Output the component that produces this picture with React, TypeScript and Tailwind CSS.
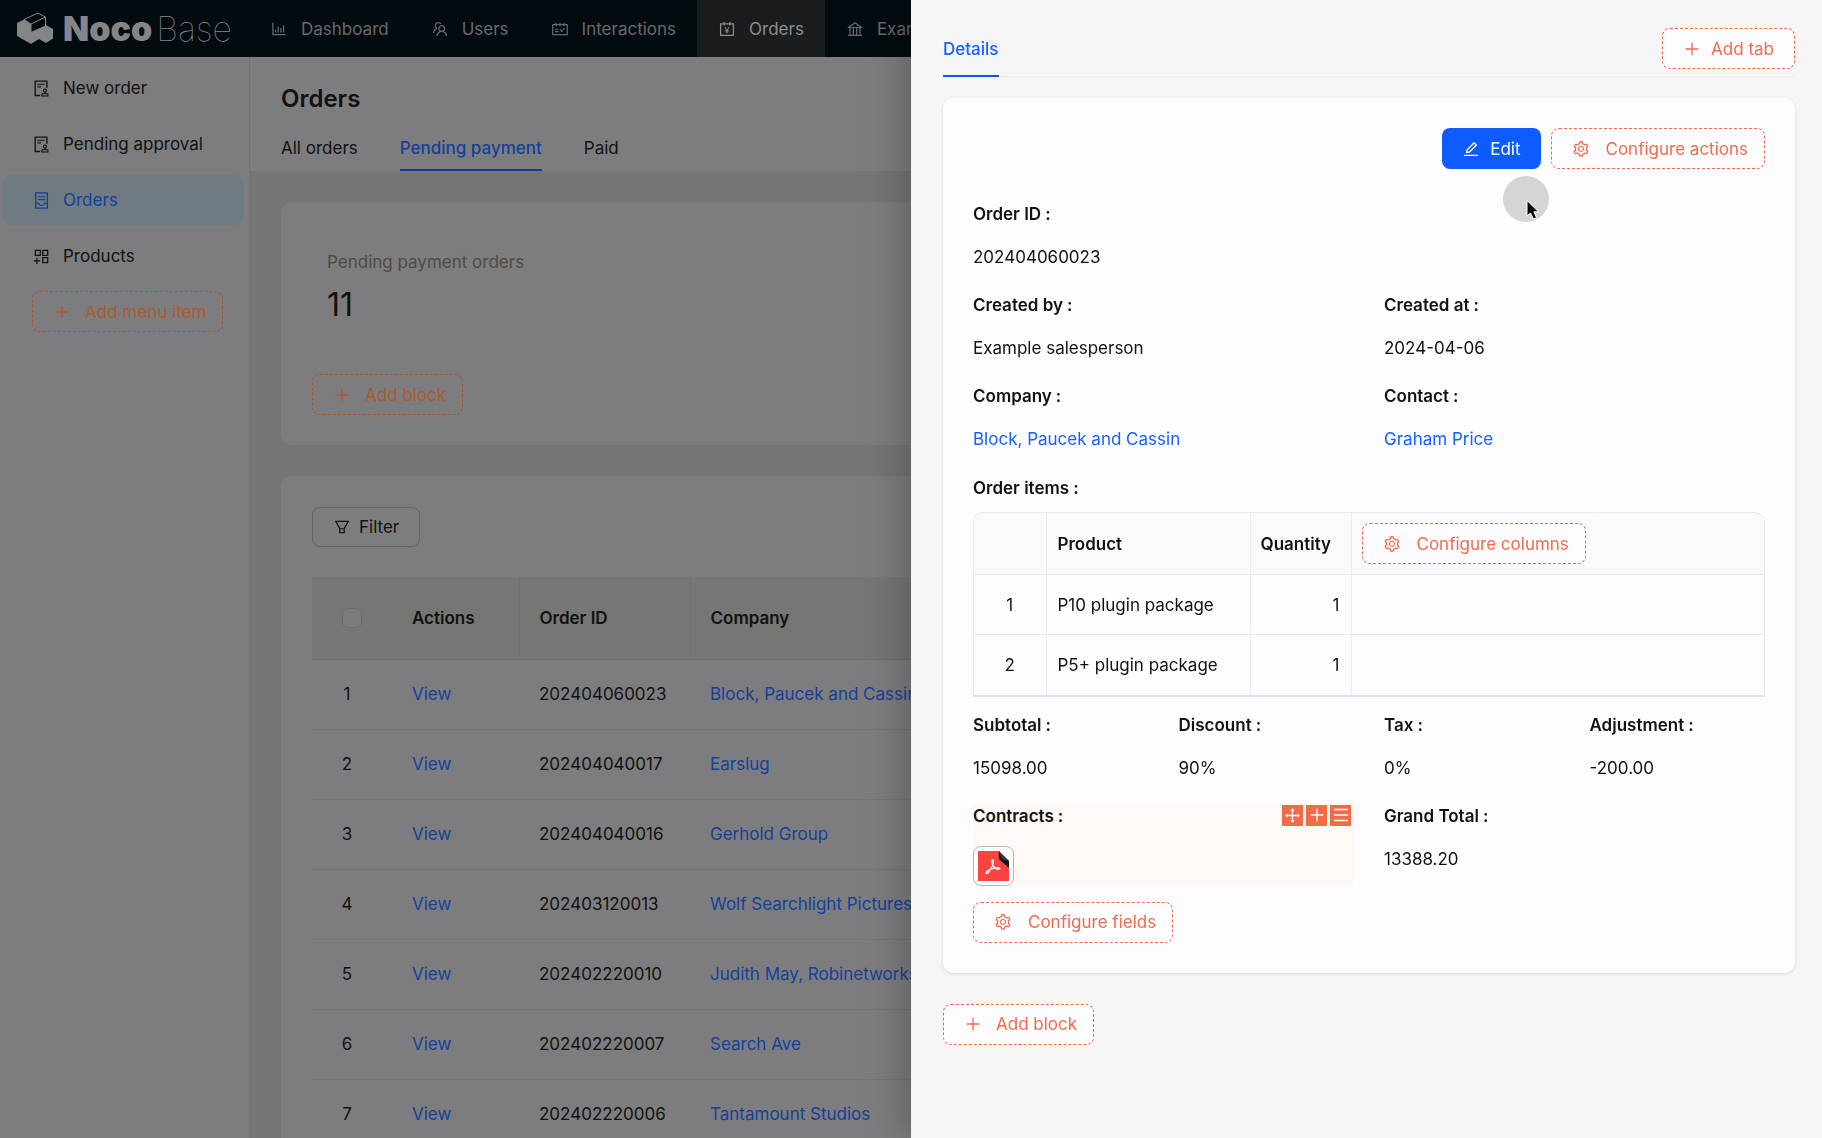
import type { ReactNode } from "react";
import type { IconType } from "react-icons";
import {
  AiOutlineAccountBook,
  AiOutlineAppstoreAdd,
  AiOutlineAudit,
  AiOutlineBank,
  AiOutlineBarChart,
  AiOutlineContainer,
  AiOutlineDrag,
  AiOutlineEdit,
  AiOutlineFilter,
  AiOutlineMenu,
  AiOutlinePlus,
  AiOutlineSchedule,
  AiOutlineSetting,
  AiOutlineTeam,
} from "react-icons/ai";

const topNav: { icon: IconType; label: string; active?: boolean }[] = [
  { icon: AiOutlineBarChart, label: "Dashboard" },
  { icon: AiOutlineTeam, label: "Users" },
  { icon: AiOutlineSchedule, label: "Interactions" },
  { icon: AiOutlineAccountBook, label: "Orders", active: true },
  { icon: AiOutlineBank, label: "Examples" },
];

const sideNav: { icon: IconType; label: string; active?: boolean }[] = [
  { icon: AiOutlineAudit, label: "New order" },
  { icon: AiOutlineAudit, label: "Pending approval" },
  { icon: AiOutlineContainer, label: "Orders", active: true },
  { icon: AiOutlineAppstoreAdd, label: "Products" },
];

const orders = [
  ["202404060023", "Block, Paucek and Cassin"],
  ["202404040017", "Earslug"],
  ["202404040016", "Gerhold Group"],
  ["202403120013", "Wolf Searchlight Pictures"],
  ["202402220010", "Judith May, Robinetworks"],
  ["202402220007", "Search Ave"],
  ["202402220006", "Tantamount Studios"],
];

const items = [
  ["P10 plugin package", "1"],
  ["P5+ plugin package", "1"],
];

function Logo() {
  return (
    <a href="#home" className="flex w-[249px] shrink-0 items-center pl-4 text-[#858588]">
      <svg width="38" height="34" viewBox="0 0 38 34" aria-hidden="true">
        <path d="M1 11 L8 7.5 L15 12 V20 L26 14 L30 13 L37 17 V26.5 L30 31 L23 27 L15 32 L1 24 Z" fill="currentColor" />
        <path d="M8 7.5 L22 1 L29.500 5 V14 L15 20.500 V12 Z" fill="#020c10" stroke="currentColor" strokeWidth="1" />
        <path d="M15 12 L29.500 5" stroke="currentColor" strokeWidth="1" />
      </svg>
      <span className="ml-[9px] text-[34px] leading-[40px] font-black">Noco</span>
      <span className="ml-1 text-[34px] leading-[40px] font-thin">Base</span>
    </a>
  );
}

const tones = {
  bright: "border-[#f2694a] bg-[#fdfdff] text-[#f16b4b] ",
  dim: "border-[#ab5526] text-[#ab5a30] ",
};

const spacings = {
  add: "gap-3.5 pr-4",
  settings: "gap-4 pr-4",
  compact: "gap-2.5 pr-5",
};

function DashedButton({
  icon: Icon,
  children,
  tone,
  spacing,
}: {
  icon: IconType;
  children: ReactNode;
  tone: keyof typeof tones;
  spacing: keyof typeof spacings;
}) {
  return (
    <button
      type="button"
      className={
        "flex h-[41px] w-fit shrink-0 items-center rounded-lg border border-dashed pl-5 leading-6 whitespace-nowrap " +
        tones[tone] +
        spacings[spacing]
      }
    >
      <Icon size={18} />
      {children}
    </button>
  );
}

function Field({ label, children }: { label: string; children: ReactNode }) {
  return (
    <div className="flex flex-col gap-4 leading-[27px]">
      <div className="font-semibold">
        {label}
        <span className="ml-1">:</span>
      </div>
      <div>{children}</div>
    </div>
  );
}

function PdfThumb() {
  return (
    <a href="#contract" aria-label="Contract PDF" className="block w-fit rounded-lg border border-[#b9b6bd] bg-[#fdfdff] p-1">
      <svg width="31" height="30" viewBox="0 0 32 30" preserveAspectRatio="none" aria-hidden="true">
        <path d="M0 0 H32 V30 H0 Z" fill="#fd4340" />
        <path d="M21.500 0 H32 V17 Z" fill="#fdfdff" />
        <path d="M21.500 0 L32 10 V17 L21.500 8 Z" fill="#15171c" />
        <path d="M21.500 0 L32 10 L25 8 Z" fill="#3c3f46" />
        <path
          d="M15 9 C13.500 9 14.500 13.500 16 15.500 C18 18.500 22.500 19 22.500 17.500 C22.500 15.500 12 17.500 9 20.500 C7.500 22.500 9.500 23.500 11.500 20.500 C13.500 17.500 16.500 12 15.800 9.500 Z"
          fill="none"
          stroke="#ffeceb"
          strokeWidth="1.500"
          strokeLinejoin="round"
        />
      </svg>
    </a>
  );
}

function Header() {
  return (
    <header className="flex h-[57px] shrink-0 bg-[#020c10] text-[#68686b]">
      <Logo />
      <nav className="flex">
        {topNav.map(({ icon: Icon, label, active }) => (
          <a
            key={label}
            href={"#" + label}
            className={"flex items-center gap-[13px] px-[21px] " + (active ? "bg-[#1a1c1d] text-[#8c8c90]" : "")}
          >
            <Icon size={18} />
            {label}
          </a>
        ))}
      </nav>
    </header>
  );
}

function Sidebar() {
  return (
    <aside className="w-[250px] shrink-0 border-r border-[#73736f] bg-[#7d7d80] pt-1.5 pr-[5px] pl-0.5">
      <nav className="flex flex-col gap-1.5">
        {sideNav.map(({ icon: Icon, label, active }, i) => (
          <a
            key={i}
            href={"#side-" + i}
            className={
              "flex h-[50px] items-center gap-3 rounded-[10px] pl-[30px] " + (active ? "bg-[#707a82] text-[#144199]" : "")
            }
          >
            <Icon size={19} />
            {label}
          </a>
        ))}
      </nav>
      <div className="mt-2.5 pl-[30px]">
        <DashedButton icon={AiOutlinePlus} tone="dim" spacing="add">
          Add menu item
        </DashedButton>
      </div>
    </aside>
  );
}

function OrdersPage() {
  const th = "border-r border-[#70706e] px-5 text-left font-semibold";
  return (
    <main className="min-w-0 flex-1">
      <div className="bg-[#7d7d80] px-[31px] pt-6">
        <h1 className="text-[24px] leading-9 font-semibold">Orders</h1>
        <div className="mt-4 flex gap-[42px]">
          <a href="#all" className="h-[38px] pt-[3px] leading-6">All orders</a>
          <a href="#pending" className="h-[38px] border-b-2 border-[#16389a] pt-[3px] leading-6 font-medium text-[#144199]">
            Pending payment
          </a>
          <a href="#paid" className="h-[38px] pt-[3px] leading-6">Paid</a>
        </div>
      </div>
      <div className="flex flex-col gap-[31px] p-[31px]">
        <section className="rounded-[10px] bg-[#7d7d80] px-[31px] pb-[30px]">
          <div className="px-[15px] pt-12 pb-[46px]">
            <div className="leading-6 text-[#4c4c42]">Pending payment orders</div>
            <div className="mt-2 text-[32px] leading-[46px]">11</div>
          </div>
          <DashedButton icon={AiOutlinePlus} tone="dim" spacing="add">
            Add block
          </DashedButton>
        </section>
        <section className="rounded-[10px] bg-[#7d7d80] p-[31px]">
          <button
            type="button"
            className="flex h-10 items-center gap-2 rounded-lg border border-[#65655c] px-5"
          >
            <AiOutlineFilter size={18} />
            Filter
          </button>
          <table className="mt-[30px] w-full table-fixed border-collapse">
            <colgroup>
              <col className="w-20" />
              <col className="w-[127px]" />
              <col className="w-[171px]" />
              <col />
            </colgroup>
            <thead className="bg-[#767675]">
              <tr className="h-[82px] border-b border-[#6d6d69]">
                <th>
                  <input
                    type="checkbox"
                    aria-label="Select all"
                    className="mx-auto block size-5 appearance-none rounded-md border border-[#6c6c66] bg-[#7b7b7d]"
                  />
                </th>
                <th className={th}>Actions</th>
                <th className={th}>Order ID</th>
                <th className="px-5 text-left font-semibold">Company</th>
              </tr>
            </thead>
            <tbody>
              {orders.map(([id, company], i) => (
                <tr key={id} className="h-[70px] border-b border-[#747473]">
                  <td className="pr-2.5 text-center">{i + 1}</td>
                  <td className="px-5">
                    <a href={"#view-" + id} className="text-[#144199]">View</a>
                  </td>
                  <td className="px-5">{id}</td>
                  <td className="px-5 whitespace-nowrap">
                    <a href={"#company-" + id} className="text-[#144199]">{company}</a>
                  </td>
                </tr>
              ))}
            </tbody>
          </table>
        </section>
      </div>
    </main>
  );
}

function ItemsTable() {
  const cell = "border-r border-[#ececec] px-[11px]";
  return (
    <div className="overflow-hidden rounded-t-[10px] border border-b-2 border-[#e9e9ef] border-b-[#dfdff6]">
      <table className="w-full table-fixed border-collapse">
        <colgroup>
          <col className="w-[72px]" />
          <col className="w-[204px]" />
          <col className="w-[101px]" />
          <col />
        </colgroup>
        <thead className="bg-[#fafafd]">
          <tr className="border-b border-[#ececdc]">
            <th className={cell} />
            <th className={cell + " text-left font-semibold"}>Product</th>
            <th className="border-r border-[#ececec] px-2.5 text-left font-semibold">Quantity</th>
            <th className="px-2.5 py-2.5 font-normal">
              <DashedButton icon={AiOutlineSetting} tone="bright" spacing="settings">
                Configure columns
              </DashedButton>
            </th>
          </tr>
        </thead>
        <tbody>
          {items.map(([name, qty], i) => (
            <tr key={name} className="h-[60px] border-b border-[#ececdc] last:border-b-0">
              <td className={cell + " text-center"}>{i + 1}</td>
              <td className={cell}>{name}</td>
              <td className={cell + " text-right"}>{qty}</td>
              <td />
            </tr>
          ))}
        </tbody>
      </table>
    </div>
  );
}

function Pointer() {
  return (
    <div className="pointer-events-none absolute top-12 right-[216px] size-[46px] rounded-full bg-[#d5d5d6]" aria-hidden="true">
      <svg className="absolute top-[23px] left-[22px]" width="18" height="24" viewBox="0 0 18 24">
        <path
          d="M2 1.500 V17 L5.500 14 L8.500 20 L11.500 18.500 L8.800 12.800 H13.500 Z"
          fill="#000"
          stroke="#fff"
          strokeWidth="1"
        />
      </svg>
    </div>
  );
}

function Drawer() {
  return (
    <aside
      role="dialog"
      aria-label="Order details"
      className="fixed inset-y-0 right-0 w-1/2 overflow-hidden bg-[#f5f5f6] pr-[27px] pl-8 shadow-[-9px_0_36px_rgba(0,0,0,0.22)]"
    >
      <div className="flex h-[77px] items-end justify-between border-b border-[#ececef]">
        <a href="#details" className="-mb-px flex h-10 items-start border-b-2 border-[#1056ff] leading-6 font-medium text-[#1660ff]">
          Details
        </a>
        <div className="pb-[7px]">
          <DashedButton icon={AiOutlinePlus} tone="bright" spacing="compact">
            Add tab
          </DashedButton>
        </div>
      </div>

      <section className="mt-[21px] rounded-[10px] bg-[#fdfdff] p-[30px] shadow-[0_1px_3px_rgba(0,0,0,0.12)]">
        <div className="relative flex justify-end gap-2.5">
          <button type="button" className="flex h-[41px] items-center gap-2.5 rounded-lg bg-[#0d5cff] px-5 text-white">
            <AiOutlineEdit size={18} />
            Edit
          </button>
          <DashedButton icon={AiOutlineSetting} tone="bright" spacing="settings">
            Configure actions
          </DashedButton>
          <Pointer />
        </div>

        <div className="mt-8 grid grid-cols-2 gap-x-[30px] gap-y-[21px]">
          <div className="col-span-2">
            <Field label="Order ID">202404060023</Field>
          </div>
          <Field label="Created by">Example salesperson</Field>
          <Field label="Created at">2024-04-06</Field>
          <Field label="Company">
            <a href="#company" className="text-[#1660ff]">Block, Paucek and Cassin</a>
          </Field>
          <Field label="Contact">
            <a href="#contact" className="text-[#1660ff]">Graham Price</a>
          </Field>
        </div>

        <div className="mt-[22px] mb-2.5 leading-[27px] font-semibold">
          Order items<span className="ml-1">:</span>
        </div>
        <ItemsTable />

        <div className="mt-[15px] grid grid-cols-4 gap-x-[30px]">
          <Field label="Subtotal">15098.00</Field>
          <Field label="Discount">90%</Field>
          <Field label="Tax">0%</Field>
          <Field label="Adjustment">-200.00</Field>
        </div>

        <div className="mt-[21px] grid grid-cols-2 gap-x-[30px]">
          <div className="relative bg-[#fef8f6]">
            <Field label="Contracts">
              <PdfThumb />
            </Field>
            <div className="absolute top-0.5 right-[3px] flex gap-[3px]">
              <button type="button" aria-label="Drag" className="flex size-[21px] items-center justify-center bg-[#f16b4b] text-white">
                <AiOutlineDrag size={19} />
              </button>
              <button type="button" aria-label="Add" className="flex size-[21px] items-center justify-center bg-[#f16b4b] text-white">
                <AiOutlinePlus size={18} />
              </button>
              <button type="button" aria-label="Menu" className="flex size-[21px] items-center justify-center bg-[#f16b4b] text-white">
                <AiOutlineMenu size={18} />
              </button>
            </div>
          </div>
          <Field label="Grand Total">13388.20</Field>
        </div>

        <div className="mt-4">
          <DashedButton icon={AiOutlineSetting} tone="bright" spacing="settings">
            Configure fields
          </DashedButton>
        </div>
      </section>

      <div className="mt-[31px]">
        <DashedButton icon={AiOutlinePlus} tone="bright" spacing="add">
          Add block
        </DashedButton>
      </div>
    </aside>
  );
}

export default function App() {
  return (
    <div className="flex h-screen flex-col overflow-hidden bg-[#757573] font-['Inter',sans-serif] text-[17px] leading-6 text-[#12120e]">
      <Header />
      <div className="flex min-h-0 flex-1">
        <Sidebar />
        <OrdersPage />
      </div>
      <Drawer />
    </div>
  );
}
